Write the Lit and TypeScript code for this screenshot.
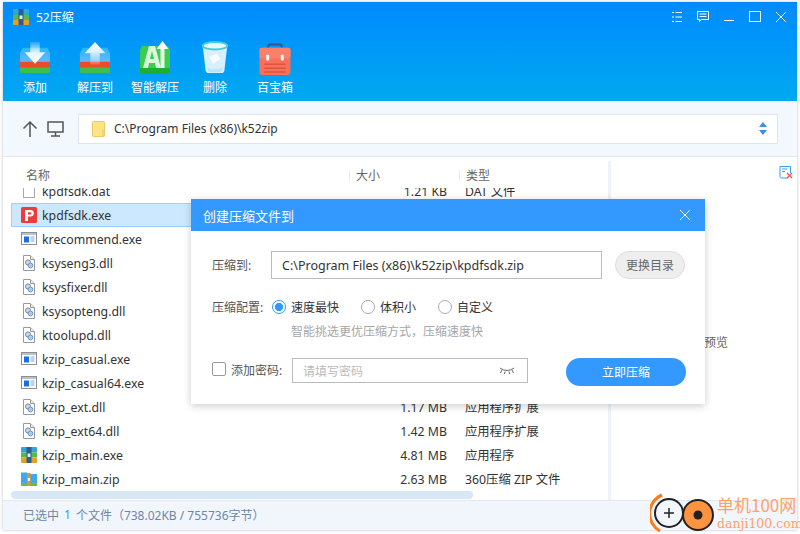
import { LitElement, html, css, svg } from "lit";
import { customElement } from "lit/decorators.js";

type Kind = "blank" | "pdf" | "exe" | "dll" | "rar" | "zip";
interface Row { name: string; kind: Kind; size: string; type: string; sel?: boolean; }

const rows: Row[] = [
  { name: "kpdfsdk.dat", kind: "blank", size: "1.21 KB", type: "DAT 文件" },
  { name: "kpdfsdk.exe", kind: "pdf", size: "", type: "", sel: true },
  { name: "krecommend.exe", kind: "exe", size: "", type: "" },
  { name: "ksyseng3.dll", kind: "dll", size: "", type: "" },
  { name: "ksysfixer.dll", kind: "dll", size: "", type: "" },
  { name: "ksysopteng.dll", kind: "dll", size: "", type: "" },
  { name: "ktoolupd.dll", kind: "dll", size: "", type: "" },
  { name: "kzip_casual.exe", kind: "exe", size: "", type: "" },
  { name: "kzip_casual64.exe", kind: "exe", size: "", type: "" },
  { name: "kzip_ext.dll", kind: "dll", size: "1.17 MB", type: "应用程序扩展" },
  { name: "kzip_ext64.dll", kind: "dll", size: "1.42 MB", type: "应用程序扩展" },
  { name: "kzip_main.exe", kind: "rar", size: "4.81 MB", type: "应用程序" },
  { name: "kzip_main.zip", kind: "zip", size: "2.63 MB", type: "360压缩 ZIP 文件" },
];

const rarIcon = (s: number) => svg`<svg width=${s} height=${s} viewBox="0 0 16 16">
  <rect x="0" y="0" width="16" height="5.500" rx="1" fill="#2fa6e0"/>
  <rect x="0" y="5.500" width="16" height="5" fill="#58b947"/>
  <rect x="0" y="10.500" width="16" height="5.500" rx="1" fill="#e5a021"/>
  <rect x="5.500" y="0" width="5" height="16" fill="#2a5f8f"/>
  <rect x="6.500" y="6.500" width="3" height="3.500" fill="#dfeaf2"/>
</svg>`;

const fileIcon = (k: Kind) => {
  switch (k) {
    case "blank":
      return svg`<svg width="16" height="16" viewBox="0 0 16 16"><rect x="2.500" y="1.500" width="11" height="13" fill="#fff" stroke="#a8a8a8"/></svg>`;
    case "pdf":
      return svg`<svg width="16" height="16" viewBox="0 0 16 16"><rect width="16" height="16" rx="1.500" fill="#ee3b3b"/><path d="M4 14V3h5.500a3.200 3.200 0 0 1 0 6.600H7V14z" fill="#fff"/><path d="M7 5.300v2.200h2.200a1.100 1.100 0 0 0 0-2.200z" fill="#ee3b3b"/></svg>`;
    case "exe":
      return svg`<svg width="16" height="16" viewBox="0 0 16 16"><rect x=".5" y="1.500" width="15" height="12" fill="#fff" stroke="#8a8f96"/><rect x="1" y="2" width="14" height="2" fill="#b9c2cc"/><rect x="3" y="5.500" width="5" height="6" fill="#1c6fe0"/><path d="M9.500 6h4M9.500 8h4M9.500 10h4" stroke="#7da6d8"/></svg>`;
    case "dll":
      return svg`<svg width="16" height="16" viewBox="0 0 16 16"><path d="M2.500.5h7l4 4v11h-11z" fill="#fff" stroke="#9a9a9a"/><path d="M9.500.5v4h4" fill="#eee" stroke="#9a9a9a"/><circle cx="7" cy="7.500" r="2.600" fill="#cfd6dc" stroke="#7f8a94"/><circle cx="9.500" cy="10.500" r="2.400" fill="#a8cdf0" stroke="#6c98c4"/></svg>`;
    case "rar":
      return rarIcon(16);
    case "zip":
      return svg`<svg width="16" height="16" viewBox="0 0 16 16"><path d="M0 1.500h6l1.500 1.500H16v9H0z" fill="#3fa9ec"/><rect x="0" y="12" width="16" height="3" fill="#6cbb3c"/><rect x="6" y="2" width="3.600" height="13" fill="#d99a2b"/><rect x="6.800" y="7" width="2" height="3" fill="#fff"/></svg>`;
  }
};

const toolIcons = [
  svg`<svg width="32" height="34" viewBox="0 0 34 36"><defs><linearGradient id="a1" x1="0" y1="0" x2="0" y2="1"><stop offset="0" stop-color="#29b6f6"/><stop offset="1" stop-color="#6ab8ff"/></linearGradient><linearGradient id="a2" x1="0" y1="0" x2="0" y2="1"><stop offset="0" stop-color="#fff" stop-opacity=".15"/><stop offset=".5" stop-color="#fff" stop-opacity=".85"/><stop offset="1" stop-color="#fff"/></linearGradient><linearGradient id="a3" x1="0" y1="1" x2="0" y2="0"><stop offset="0" stop-color="#fff" stop-opacity=".15"/><stop offset=".6" stop-color="#fff" stop-opacity=".85"/><stop offset="1" stop-color="#fff"/></linearGradient></defs>
    <path d="M4 7h26l3 6v10H1V13z" fill="url(#a1)"/><rect x="1" y="22" width="32" height="6" fill="#ee4b2b"/><path d="M1 28h32v4a2 2 0 0 1-2 2H3a2 2 0 0 1-2-2z" fill="#3fbf4a"/>
    <path d="M12 1h10v11h6L17 24 6 12h6z" fill="url(#a2)"/></svg>`,
  svg`<svg width="32" height="34" viewBox="0 0 34 36"><path d="M4 7h26l3 6v10H1V13z" fill="url(#a1)"/><rect x="1" y="22" width="32" height="6" fill="#ee4b2b"/><path d="M1 28h32v4a2 2 0 0 1-2 2H3a2 2 0 0 1-2-2z" fill="#3fbf4a"/>
    <path d="M17 1l11 12h-6v12H12V13H6z" fill="url(#a3)"/></svg>`,
  svg`<svg width="32" height="34" viewBox="0 0 32 34"><path d="M3 5h26l2 4v21a3 3 0 0 1-3 3H4a3 3 0 0 1-3-3V9z" fill="#3dcc4f"/><path d="M1 27h30v3a3 3 0 0 1-3 3H4a3 3 0 0 1-3-3z" fill="#1fae2e"/>
    <rect x="21.500" y="7" width="4" height="20" fill="#eafbea"/><path d="M23.500 0l6 8h-12z" fill="#fff"/><path d="M4 27L10 5h6l6 22h-5l-1-5h-6l-1 5zM11 18h4l-2-8z" fill="#d9f7dc" fill-rule="evenodd"/></svg>`,
  svg`<svg width="28" height="34" viewBox="0 0 28 36"><path d="M1 5l3 26q.5 3 3 3h14q2.500 0 3-3l3-26z" fill="#d7f0fb"/><ellipse cx="14" cy="5" rx="13" ry="4" fill="#e9f8fc" stroke="#3fd0d8" stroke-width="2"/><path d="M8 17l8-4 4 6-8 5z" fill="#fff" opacity=".8"/><path d="M6 28q8 4 16 0l-.5 3q-.5 2-2 2H8.500q-1.500 0-2-2z" fill="#bce4f6"/></svg>`,
  svg`<svg width="32" height="32" viewBox="0 0 32 33"><path d="M9 7V3q0-1.500 1.500-1.500h11Q23 1.500 23 3v4" fill="none" stroke="#34558f" stroke-width="2"/><rect y="5" width="32" height="28" rx="3" fill="#f7715a"/><rect y="5" width="32" height="11" rx="2" fill="#f9806a"/><rect x="7" y="12" width="3" height="6" rx="1" fill="#fff"/><rect x="22" y="12" width="3" height="6" rx="1" fill="#fff"/><path d="M5 22h22M5 26h22M5 30h22" stroke="#e0533c" stroke-width="1.500"/></svg>`,
];

@customElement("app-root")
export class AppRoot extends LitElement {
  static styles = css`
    :host { display: block; width: 800px; height: 534px; background: #fff; position: relative; overflow: hidden; font-family: "Noto Sans", "Noto Sans CJK SC", sans-serif; }
    .win { margin: 2px 0 0 3px; width: 794px; height: 528px; display: flex; flex-direction: column; background: #fff; box-shadow: 0 0 3px rgba(0,0,0,.25); }
    .head { height: 99px; flex: none; background: linear-gradient(#008bff, #00a9f0); color: #fff; display: flex; flex-direction: column; }
    .title { height: 29px; display: flex; align-items: center; padding: 0 11px 0 10px; gap: 7px; font-size: 12px; }
    .title .sp { flex: 1; }
    .wbtns { display: flex; align-items: center; gap: 15px; }
    .tools { display: flex; padding-left: 2px; margin-top: 9px; }
    .tool { width: 60px; display: flex; flex-direction: column; align-items: center; font-size: 12px; line-height: 16px; gap: 5px; }
    .tool svg { display: block; }
    .tool .ic { height: 35px; display: flex; align-items: flex-end; }
    .path { height: 56px; flex: none; background: #f3f7fe; border-bottom: 1px solid #e2e7f1; display: flex; align-items: center; padding: 0 19px; box-sizing: border-box; gap: 9px; }
    .addr { flex: 1; height: 30px; box-sizing: border-box; margin-left: 5px; background: #fff; border: 1px solid #dfe5f0; display: flex; align-items: center; padding: 0 10px 0 13px; font-size: 12px; color: #333; gap: 9px; }
    .addr .txt { flex: 1; }
    .body { flex: 1; min-height: 0; display: flex; }
    .list { width: 605px; flex: none; display: flex; flex-direction: column; overflow: hidden; }
    .cols { height: 31px; box-sizing: border-box; padding-top: 13px; flex: none; display: grid; grid-template-columns: 346px 110px 1fr; font-size: 12px; color: #666; align-items: start; }
    .cols span { padding-left: 6px; border-left: 1px solid #e6ebf3; line-height: 11px; height: 11px; }
    .cols span:first-child { padding-left: 23px; border: 0; }
    .rows { height: 303px; overflow: hidden; flex: none; }
    .inner { margin-top: -9px; }
    .row { height: 24px; margin-left: 8px; box-sizing: border-box; display: grid; grid-template-columns: 338px 110px 1fr; align-items: center; font-size: 12.3px; color: #333; }
    .row.sel { background: #cce8ff; outline: 1px solid #99d1ff; outline-offset: -1px; }
    .nm { display: flex; align-items: center; gap: 5px; padding-left: 10px; }
    .nm svg { flex: none; }
    .sz { text-align: right; padding-right: 12px; }
    .ty { padding-left: 6px; }
    .bar { height: 8px; flex: none; margin-left: 8px; background: #d8e7f5; width: 462px; border-radius: 4px; margin-top: 0; }
    .vsep { width: 3px; flex: none; background: #eef3fa; margin-top: 4px; }
    .side { flex: 1; display: flex; flex-direction: column; align-items: flex-end; padding: 8px 4px 0 0; }
    .status { height: 30px; flex: none; background: #f1f6fd; border-top: 1px solid #e2e7f1; box-sizing: border-box; display: flex; align-items: center; padding: 0 0 2px 20px; font-size: 12px; color: #6f85a8; }
    .status b { font-weight: 400; color: #3399ff; margin: 0 5px; }
    .preview { position: absolute; left: 704px; top: 335px; font-size: 12px; color: #666; line-height: 16px; }

    .dlg { position: absolute; left: 191px; top: 199px; width: 514px; height: 205px; background: #fff; box-shadow: 0 2px 8px rgba(0,0,0,.2); display: flex; flex-direction: column; font-size: 12px; color: #555; }
    .dlgh { height: 32px; flex: none; background: #3399ff; color: #fff; display: flex; align-items: center; justify-content: space-between; padding: 0 14px 0 12px; font-size: 13px; }
    .dlgb { flex: 1; padding: 20px 19px 0 21px; display: flex; flex-direction: column; }
    .line { display: flex; align-items: center; }
    .lbl { width: 59px; flex: none; }
    .opts .lbl { width: 60px; }
    .field { border: 1px solid #bcbcbc; box-sizing: border-box; height: 28px; width: 331px; display: flex; align-items: center; padding-left: 10px; color: #333; font-size: 12.5px; }
    .chg { margin-left: 13px; width: 70px; height: 28px; box-sizing: border-box; border: 1px solid #dedede; border-radius: 14px; background: #eeeeee; display: flex; align-items: center; justify-content: center; color: #666; }
    .opts { margin-top: 18px; height: 20px; }
    .radio { display: flex; align-items: center; gap: 5px; color: #333; width: 89px; }
    .radio.w2 { width: 77px; }
    .radio i { width: 14px; height: 14px; border-radius: 50%; border: 1px solid #aaa; box-sizing: border-box; display: block; background: #fff; flex: none; }
    .radio.on i { border-color: #3399ff; background: radial-gradient(circle, #3399ff 0 3.800px, #fff 4.400px); }
    .hint { margin: 7px 0 0 79px; color: #a6a6a6; line-height: 16px; }
    .pw { margin-top: 18px; align-items: flex-start; }
    .ck { width: 14px; height: 14px; margin-top: 4px; box-sizing: border-box; border: 1px solid #999; border-radius: 2px; background: #fff; margin-right: 5px; flex: none; }
    .pwl { width: 61px; flex: none; color: #555; line-height: 25px; }
    .pwi { width: 236px; height: 25px; box-sizing: border-box; border: 1px solid #bcbcbc; display: flex; align-items: center; justify-content: space-between; padding: 0 12px 0 10px; color: #bbb; }
    .go { margin-left: 38px; width: 120px; height: 28px; border-radius: 14px; background: #3399ff; color: #fff; display: flex; align-items: center; justify-content: center; }

    .mark { position: absolute; left: 650px; top: 491px; display: flex; align-items: center; color: #ffa268; pointer-events: none; }
    .mark .t { margin-left: 1px; display: flex; flex-direction: column; line-height: 1; margin-top: -2px; }
    .mark .a { font-size: 17px; font-family: "Noto Sans CJK SC", sans-serif; }
    .mark .b { font-size: 12.500px; margin-top: 5px; font-family: "DejaVu Serif", serif; }
  `;

  render() {
    const labels = ["添加", "解压到", "智能解压", "删除", "百宝箱"];
    return html`
      <div class="win">
        <div class="head">
          <div class="title">
            ${rarIcon(16)}
            <span>52压缩</span>
            <span class="sp"></span>
            <div class="wbtns">
              <svg width="10" height="12" viewBox="0 0 10 12" stroke="#fff" fill="none"><path d="M0 1.500h2M3.500 1.500H10M0 6h2M3.500 6H10M0 10.500h2M3.500 10.500H10"/></svg>
              <svg width="12" height="13" viewBox="0 0 12 13" stroke="#fff" fill="none"><path d="M.5 1.500h11v8H4l-1.500 2v-2h-2z"/><path d="M2.500 4h7M2.500 6.500h7"/></svg>
              <svg width="10" height="12" viewBox="0 0 10 12" stroke="#fff" fill="none"><path d="M0 9.500h10"/></svg>
              <svg width="12" height="12" viewBox="0 0 12 12" stroke="#fff" fill="none"><rect x=".5" y=".5" width="11" height="10"/></svg>
              <svg width="10" height="12" viewBox="0 0 10 12" stroke="#fff" fill="none"><path d="M0 1l10 10M10 1L0 11"/></svg>
            </div>
          </div>
          <div class="tools">
            ${labels.map((l, i) => html`<div class="tool"><div class="ic">${toolIcons[i]}</div><span>${l}</span></div>`)}
          </div>
        </div>
        <div class="path">
          <svg width="16" height="18" viewBox="0 0 16 18" fill="none" stroke="#555" stroke-width="1.500"><path d="M8 17V2M1.500 8.500L8 2l6.500 6.500"/></svg>
          <svg width="17" height="16" viewBox="0 0 17 16" fill="none" stroke="#555" stroke-width="1.500"><rect x="1" y="1" width="15" height="10"/><path d="M8.500 11v4M4 15h9"/></svg>
          <div class="addr">
            <svg width="13" height="16" viewBox="0 0 13 16"><rect x=".5" y=".5" width="12" height="15" rx="1" fill="#ffe38a" stroke="#e8c860"/><rect x="10" y="9" width="2.500" height="6.500" fill="#f5d36b"/></svg>
            <span class="txt">C:\\Program Files (x86)\\k52zip</span>
            <svg width="8" height="13" viewBox="0 0 8 13" fill="#3b8fe8"><path d="M4 0l4 5H0zM4 13l4-5H0z"/></svg>
          </div>
        </div>
        <div class="body">
          <div class="list">
            <div class="cols"><span>名称</span><span>大小</span><span>类型</span></div>
            <div class="rows"><div class="inner">
              ${rows.map((r) => html`<div class="row ${r.sel ? "sel" : ""}">
                <div class="nm">${fileIcon(r.kind)}<span>${r.name}</span></div>
                <div class="sz">${r.size}</div><div class="ty">${r.type}</div>
              </div>`)}
            </div></div>
            <div class="bar"></div>
          </div>
          <div class="vsep"></div>
          <div class="side">
            <svg width="14" height="14" viewBox="0 0 14 14" fill="none"><path d="M9 13H2.500Q1 13 1 11.500v-10h10.500V8" stroke="#3b9cf0"/><path d="M3 4h5M3 6.500h3" stroke="#3b9cf0"/><path d="M8 8l5 5M13 8l-5 5" stroke="#f25555" stroke-width="1.300"/></svg>
          </div>
        </div>
        <div class="status">已选中<b>1</b>个文件（738.02KB / 755736字节）</div>
      </div>
      <div class="preview">预览</div>

      <div class="dlg">
        <div class="dlgh"><span>创建压缩文件到</span>
          <svg width="12" height="12" viewBox="0 0 12 12" stroke="#fff" fill="none"><path d="M1 1l10 10M11 1L1 11"/></svg>
        </div>
        <div class="dlgb">
          <div class="line"><span class="lbl">压缩到:</span><div class="field">C:\\Program Files (x86)\\k52zip\\kpdfsdk.zip</div><div class="chg">更换目录</div></div>
          <div class="line opts"><span class="lbl">压缩配置:</span>
            <div class="radio on"><i></i>速度最快</div><div class="radio w2"><i></i>体积小</div><div class="radio"><i></i>自定义</div>
          </div>
          <div class="hint">智能挑选更优压缩方式，压缩速度快</div>
          <div class="line pw"><div class="ck"></div><span class="pwl">添加密码:</span>
            <div class="pwi"><span>请填写密码</span>
              <svg width="16" height="8" viewBox="0 0 16 8" fill="none" stroke="#666"><path d="M1 1q7 5 14 0M3 3L1.500 6M6 4.500L5.500 7M10 4.500l.5 2.500M13 3l1.500 3"/></svg>
            </div>
            <div class="go">立即压缩</div>
          </div>
        </div>
      </div>

      <div class="mark">
        <svg width="66" height="46" viewBox="0 0 66 46" fill="none">
          <path d="M12 4A20 20 0 0 0 10 40" stroke="#ff7a1a" stroke-width="3"/>
          <circle cx="19" cy="22" r="14" stroke="#222" stroke-width="2"/>
          <path d="M19 17v10M14 22h10" stroke="#222" stroke-width="1.500"/>
          <circle cx="48" cy="24" r="15" fill="#ff9440" stroke="#222" stroke-width="2"/>
          <circle cx="48" cy="24" r="4.500" fill="#222"/>
        </svg>
        <div class="t"><span class="a">单机100网</span><span class="b">danji100.com</span></div>
      </div>
    `;
  }
}
